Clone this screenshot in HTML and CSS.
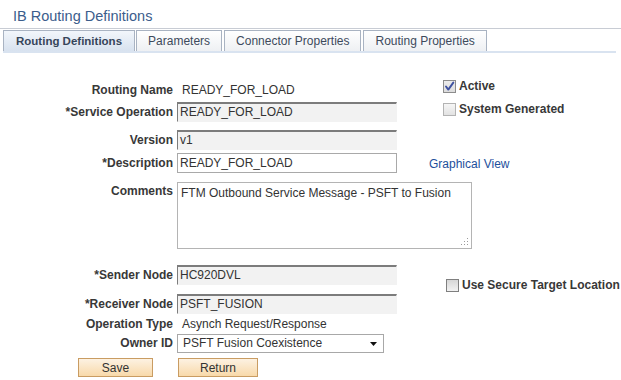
FILE: index.html
```html
<!DOCTYPE html>
<html>
<head>
<meta charset="utf-8">
<title>IB Routing Definitions</title>
<link rel="stylesheet" href="styles.css">
</head>
<body>
<div class="title">IB Routing Definitions</div>
<div class="tabs">
  <div class="tab active">Routing Definitions</div>
  <div class="tab">Parameters</div>
  <div class="tab">Connector Properties</div>
  <div class="tab">Routing Properties</div>
</div>
<div class="form">
  <div class="lbl r1 lh22">Routing Name</div>
  <div class="val r1 lh22">READY_FOR_LOAD</div>
  <div class="chk r1 c3 in14 off1"><span class="box checked"><svg width="11" height="11" viewBox="0 0 11 11"><path d="M2 5.5 L4.3 8.6 L9.3 1.6" fill="none" stroke="#3e51a0" stroke-width="1.9" stroke-linecap="round" stroke-linejoin="round"/></svg></span>Active</div>

  <div class="lbl r2 off1 lh20">*Service Operation</div>
  <div class="field disabled r2 off1">READY_FOR_LOAD</div>
  <div class="chk r2 c3 in14 off2"><span class="box"></span>System Generated</div>

  <div class="lbl r3 off5 lh20">Version</div>
  <div class="field disabled r3 off5">v1</div>

  <div class="lbl r4 off2 lh20">*Description</div>
  <div class="field r4 off2">READY_FOR_LOAD</div>
  <a class="link r4 c3 off5" href="#">Graphical View</a>

  <div class="lbl r5 off5 lh18">Comments</div>
  <div class="textarea r5 off5">FTM Outbound Service Message - PSFT to Fusion<svg class="grip" width="10" height="8" viewBox="0 0 10 8"><rect x="8" y="0" width="1" height="1" fill="#9a9a9a"/><rect x="5" y="3" width="1" height="1" fill="#9a9a9a"/><rect x="8" y="3" width="1" height="1" fill="#9a9a9a"/><rect x="2" y="6" width="1" height="1" fill="#9a9a9a"/><rect x="5" y="6" width="1" height="1" fill="#9a9a9a"/><rect x="8" y="6" width="1" height="1" fill="#9a9a9a"/></svg></div>

  <div class="lbl r6 off12 lh20">*Sender Node</div>
  <div class="field disabled r6 off12">HC920DVL</div>
  <div class="chk secure c3 in17 off26"><span class="box dark"></span>Use Secure Target Location</div>

  <div class="lbl r7 off7 lh20">*Receiver Node</div>
  <div class="field disabled r7 off7">PSFT_FUSION</div>

  <div class="lbl r8 lh15">Operation Type</div>
  <div class="val r8 lh15">Asynch Request/Response</div>

  <div class="lbl r9 off2 lh19">Owner ID</div>
  <div class="select r9 off2"><span>PSFT Fusion Coexistence</span><svg width="7" height="4" viewBox="0 0 7 4"><path d="M0 0 H7 L3.5 4 Z" fill="#111"/></svg></div>

  <div class="btn save r10 off4">Save</div>
  <div class="btn ret r10 off4">Return</div>
</div>
</body>
</html>
```

FILE: styles.css
```css
body {
  margin: 0;
  width: 621px;
  background: #fff;
  font-family: "Liberation Sans", Arial, sans-serif;
  font-size: 12px;
  color: #333;
}

.title {
  height: 29px;
  box-sizing: border-box;
  padding: 6px 0 0 13px;
  line-height: 21px;
  font-size: 14.5px;
  color: #3b5d8c;
  border-bottom: 1px solid #c8ccd4;
}

.tabs {
  display: flex;
  gap: 2px;
  margin: 1px 0 0 3px;
  width: 613px;
  border-bottom: 2px solid #d9e3f0;
}

.tab {
  height: 21px;
  box-sizing: border-box;
  border: 1px solid #a9b3c2;
  border-bottom: 0;
  padding: 0 11px;
  line-height: 21px;
  font-size: 12px;
  color: #3d4a5c;
  background: linear-gradient(#ffffff, #eef0f3);
  white-space: nowrap;
}

.tab.active {
  font-weight: bold;
  font-size: 11.5px;
  padding: 0 12px;
  margin-right: -1px;
  color: #36455a;
  background: linear-gradient(#f2f6fb, #d8e2ef);
}

.form {
  display: grid;
  grid-template-columns: 173px 248px 1fr;
  grid-template-rows: 22px 24px 26px 26px 76px 34px 30px 15px 22px 23px;
  column-gap: 4px;
  padding-top: 26px;
}

.r1 { grid-row: 1; }
.r2 { grid-row: 2; }
.r3 { grid-row: 3; }
.r4 { grid-row: 4; }
.r5 { grid-row: 5; }
.r6 { grid-row: 6; }
.r7 { grid-row: 7; }
.r8 { grid-row: 8; }
.r9 { grid-row: 9; }
.r10 { grid-row: 10; }
.c3 { grid-column: 3; }

.off1 { margin-top: 1px; }
.off2 { margin-top: 2px; }
.off4 { margin-top: 4px; }
.off5 { margin-top: 5px; }
.off7 { margin-top: 7px; }
.off12 { margin-top: 12px; }
.off26 { margin-top: 26px; }

.lh15 { line-height: 15px; }
.lh18 { line-height: 18px; }
.lh19 { line-height: 19px; }
.lh20 { line-height: 20px; }
.lh22 { line-height: 22px; }

.in14 { margin-left: 14px; }
.in17 { margin-left: 17px; }

.lbl {
  grid-column: 1;
  text-align: right;
  font-weight: bold;
  color: #383838;
  white-space: nowrap;
  align-self: start;
}

.val {
  grid-column: 2;
  padding-left: 5px;
  white-space: nowrap;
  align-self: start;
}

.field {
  grid-column: 2;
  align-self: start;
  width: 220px;
  height: 20px;
  box-sizing: border-box;
  border: 1px solid #a9a9a9;
  padding-left: 2px;
  line-height: 18px;
  background: #fff;
  white-space: nowrap;
}

.field.disabled {
  background: #f2f2f2;
  border-color: #7c7c7c #f2f2f2 #f2f2f2 #7c7c7c;
  border-top-width: 2px;
  line-height: 17px;
}

.textarea {
  grid-column: 2 / 4;
  align-self: start;
  position: relative;
  width: 295px;
  height: 67px;
  box-sizing: border-box;
  border: 1px solid #b4b4b4;
  padding: 3px 3px 0 3px;
  line-height: 15px;
  background: #fff;
}

.grip {
  position: absolute;
  right: 2px;
  bottom: 2px;
}

.select {
  grid-column: 2;
  align-self: start;
  width: 207px;
  height: 19px;
  box-sizing: border-box;
  border: 1px solid #a8a8a8;
  padding: 0 6px 0 5px;
  display: flex;
  align-items: center;
  justify-content: space-between;
  line-height: 17px;
  background: #fff;
}

.chk {
  display: flex;
  align-items: center;
  gap: 3px;
  align-self: start;
  font-weight: bold;
  color: #383838;
  line-height: 13px;
  white-space: nowrap;
}

.chk.secure {
  grid-row: 6 / 8;
}

.box {
  width: 13px;
  height: 13px;
  box-sizing: border-box;
  border: 1px solid #b3b3b3;
  background: linear-gradient(#f6f6f6, #e2e2e2);
  display: flex;
  align-items: center;
  justify-content: center;
}

.box.checked {
  border-color: #8c8c8c;
  background: linear-gradient(#ececec, #dcdcdc);
}

.box.dark {
  border-color: #7f7f7f;
  background: linear-gradient(#d6d6d6, #f2f2f2);
}

.link {
  align-self: start;
  color: #1d4f9c;
  text-decoration: none;
  line-height: 16px;
}

.btn {
  align-self: start;
  justify-self: start;
  height: 19px;
  box-sizing: border-box;
  border: 1px solid #c99c62;
  background: linear-gradient(#fdf2e2, #f8d9aa);
  text-align: center;
  line-height: 18px;
  color: #333;
}

.btn.save {
  grid-column: 1;
  width: 75px;
  margin-left: 78px;
}

.btn.ret {
  grid-column: 2;
  width: 80px;
  margin-left: 1px;
}
```
